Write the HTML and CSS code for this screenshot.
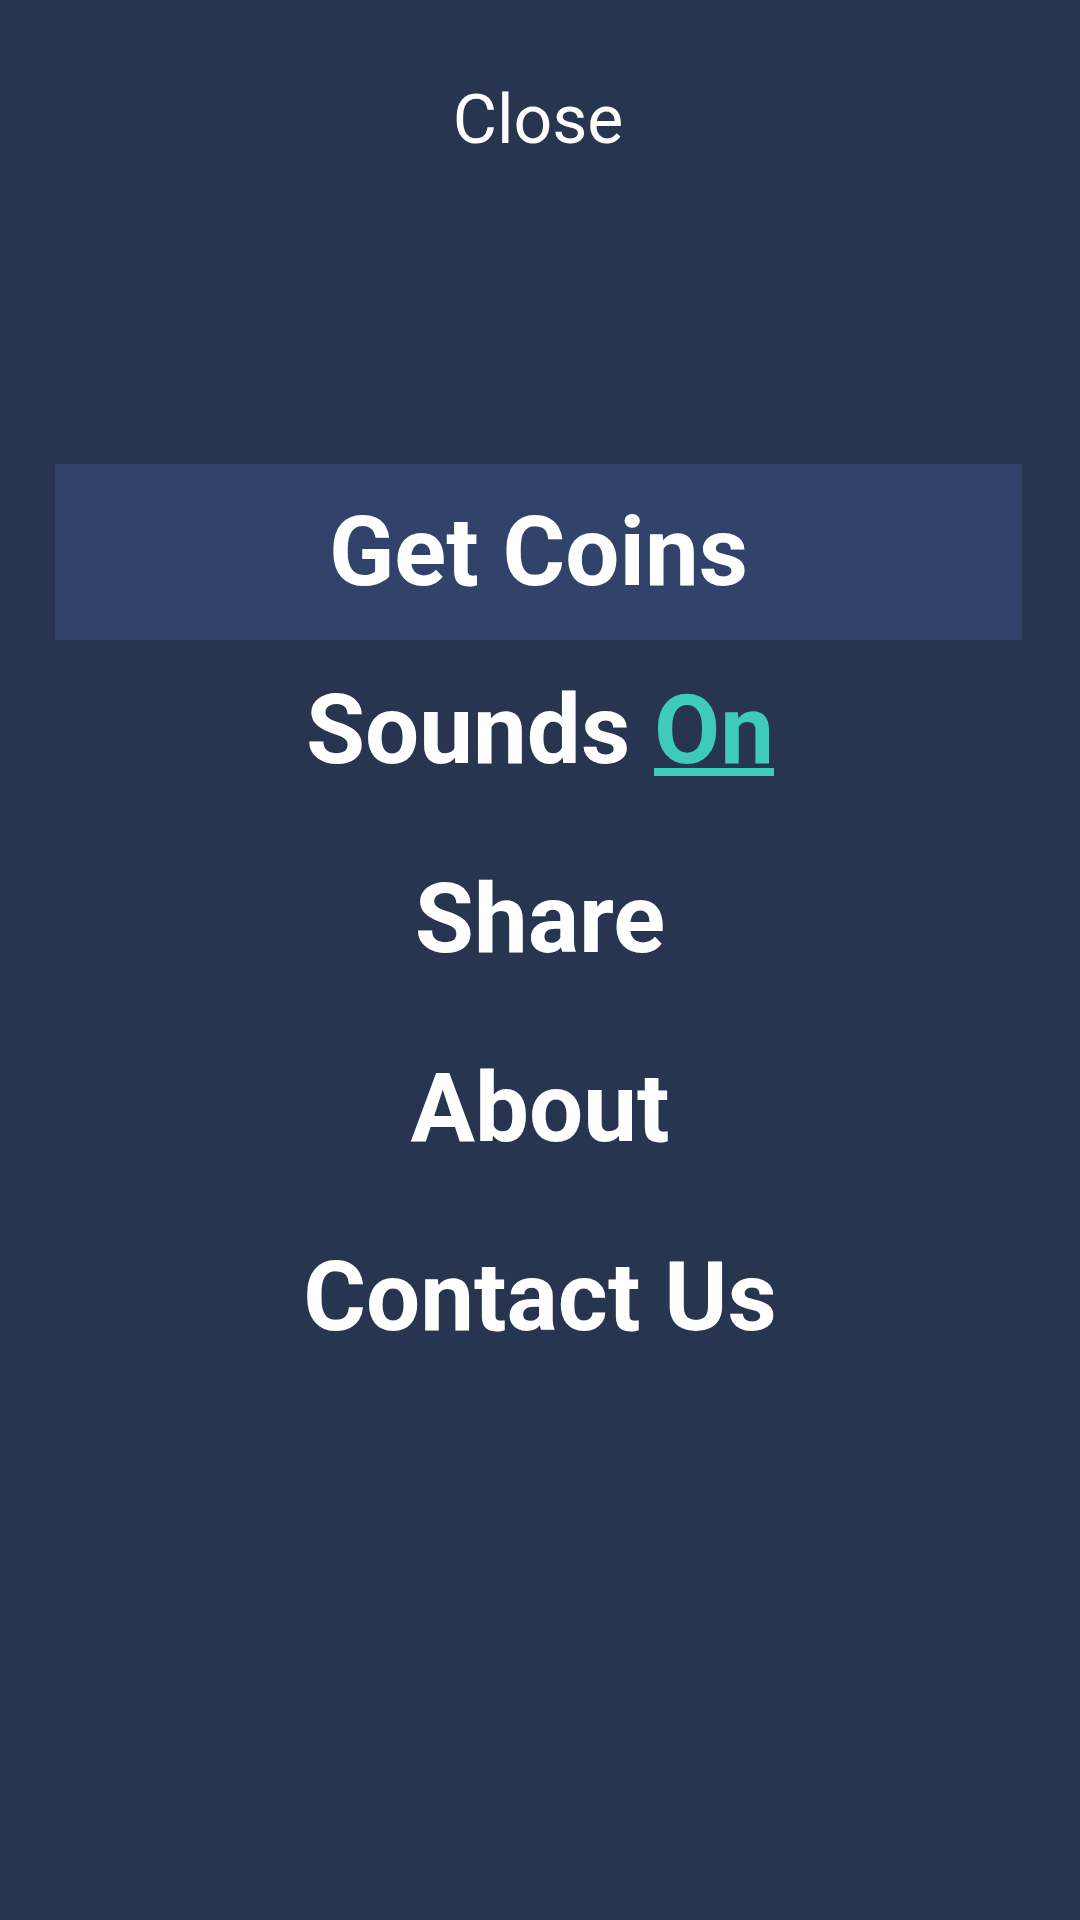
FILE: index.html
```html
<!DOCTYPE html>
<html lang="en">
<head>
<meta charset="utf-8">
<title>Menu</title>
<link rel="stylesheet" href="styles.css">
</head>
<body>
<div class="screen">
  <header class="top">
    <div class="close">Close</div>
  </header>
  <nav class="menu">
    <div class="item item-active">Get Coins</div>
    <div class="item">Sounds <span class="toggle">On</span></div>
    <div class="item">Share</div>
    <div class="item">About</div>
    <div class="item">Contact Us</div>
  </nav>
</div>
</body>
</html>
```
FILE: styles.css
```css
html, body {
  margin: 0;
  padding: 0;
}
body {
  background: #283550;
  font-family: Roboto, "Liberation Sans", sans-serif;
  color: #ffffff;
}
.screen {
  width: 1080px;
  height: 1920px;
  display: flex;
  flex-direction: column;
}
.top {
  padding-top: 70px;
  padding-right: 4px;
  display: flex;
  justify-content: center;
}
.close {
  font-size: 68px;
  font-weight: 400;
  line-height: 100px;
}
.menu {
  margin-top: 294px;
  display: flex;
  flex-direction: column;
}
.item {
  font-size: 96px;
  font-weight: 700;
  line-height: 181px;
  padding-bottom: 8px;
  text-align: center;
}
.item-active {
  margin-left: 55px;
  width: 967px;
  line-height: 176px;
  padding-bottom: 0;
  background: #32436b;
}
.toggle {
  color: #3fcbb9;
  text-decoration: underline;
  text-decoration-thickness: 8px;
  text-underline-offset: 5px;
}
```
